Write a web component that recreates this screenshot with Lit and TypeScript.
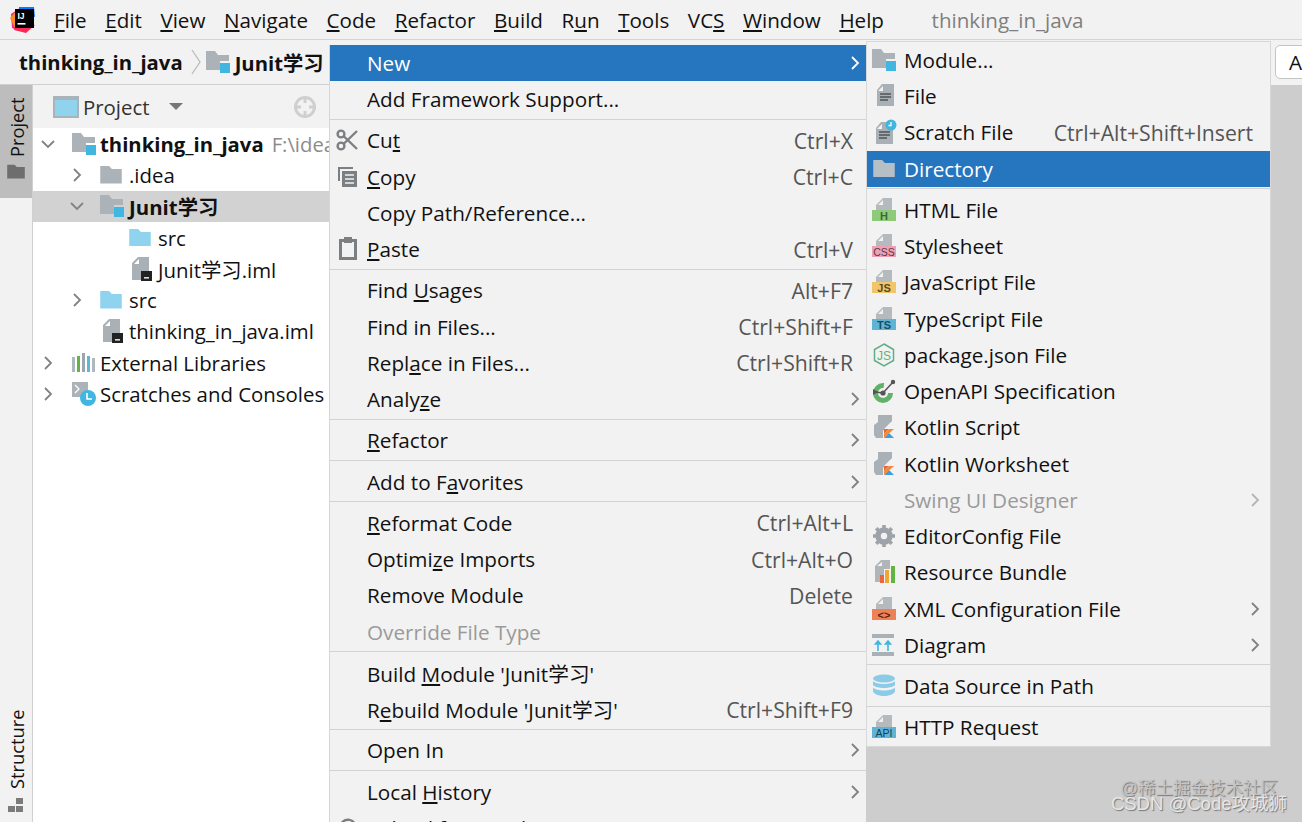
import { LitElement, html, css, svg } from "lit";
import { customElement } from "lit/decorators.js";

const G = "#abb3b9";
const BL = "#40b6e0";
const folder = (c = G, w = 22) => html`<svg width="${w}" height="${w * 0.8}" viewBox="0 0 22 18"><path fill="${c}" d="M0 0h9l3 3h10v15H0z"/></svg>`;
const modFolder = () => html`<svg width="24" height="22" viewBox="0 0 24 22"><path fill="${G}" d="M0 0h9l3 4h11v6h-9v9H0z"/><rect x="14" y="12" width="10" height="10" fill="${BL}"/></svg>`;
const badgeDoc = (c: string, t: string, tc: string) => html`<svg width="24" height="24" viewBox="0 0 24 24"><path fill="#b5babe" d="M11 0h9v12H4V7z"/><path fill="#f2f2f2" d="M11 2v5H6z"/><rect x="0" y="12" width="24" height="11" fill="${c}"/><text x="12" y="21.7" text-anchor="middle" font-family="Liberation Sans" font-size="${t.length > 2 ? 10.5 : 11}" font-weight="${t.length > 2 ? 400 : 700}" fill="${tc}">${t}</text></svg>`;
const fileDoc = () => html`<svg width="24" height="24" viewBox="0 0 24 24"><path fill="#a9b1b7" d="M10 0h12v22H5V6z"/><path fill="#f2f2f2" d="M11 2v5H6z"/><path stroke="#4f5659" stroke-width="1.4" d="M8 10h11M8 13h11M8 16h8"/></svg>`;
const scratch = () => html`<svg width="26" height="26" viewBox="0 0 26 26"><path fill="#a9b1b7" d="M10 3h12v22H5V9z"/><path fill="#f2f2f2" d="M11 5v5H6z"/><path stroke="#4f5659" stroke-width="1.4" d="M8 13h11M8 16h11M8 19h8"/><circle cx="20" cy="6" r="5.5" fill="${BL}"/><path stroke="#fff" stroke-width="1.3" fill="none" d="M20 3v3.5h-2.5"/></svg>`;
const iml = () => html`<svg width="24" height="24" viewBox="0 0 24 24"><path fill="#a9b1b7" d="M8 0h11v14h-7v9H2V6z"/><path fill="#fff" d="M9 2v5H4z"/><rect x="11" y="14" width="11" height="10" fill="#222"/><rect x="14" y="20" width="5" height="1.6" fill="#ddd"/></svg>`;
const gear = () => html`<svg width="22" height="22" viewBox="0 0 22 22"><circle cx="11" cy="11" r="6.5" fill="none" stroke="#9da3a8" stroke-width="4.5"/><path stroke="#9da3a8" stroke-width="3.6" d="M11 0v22M0 11h22M3.2 3.2l15.6 15.6M18.8 3.2L3.2 18.8"/><circle cx="11" cy="11" r="3.2" fill="#f2f2f2"/></svg>`;
const kotlin = () => html`<svg width="24" height="24" viewBox="0 0 24 24"><path fill="#a9b1b7" d="M6 0h14v6l-9 10v7H4l-2-3V10l4-3z"/><path fill="#f2f2f2" d="M12 23V14l6-6h6v15z"/><path fill="#3d9de0" d="M12 23l5-5 5 5z"/><path fill="#e8673b" d="M12 14h5l-5 5z"/><path fill="#f08a3a" d="M17 14h5l-10 9v-4z"/></svg>`;
const openapi = () => html`<svg width="24" height="24" viewBox="0 0 24 24"><circle cx="11" cy="14" r="7.5" fill="none" stroke="#62b06a" stroke-width="5" stroke-dasharray="36 11"/><path stroke="#555" stroke-width="1.5" d="M11 14L21 3M3 13l8 1"/><circle cx="11" cy="14" r="2.6" fill="#555"/><circle cx="21" cy="3" r="2.2" fill="#555"/><path fill="#555" d="M1 10l5 3-5 3z"/></svg>`;
const nodeIcon = () => html`<svg width="22" height="24" viewBox="0 0 22 24"><path fill="none" stroke="#5fae86" stroke-width="1.5" d="M11 1l9.5 5.5v11L11 23l-9.5-5.5v-11z"/><text x="11" y="16.5" text-anchor="middle" font-family="Liberation Sans" font-size="12" fill="#5fae86">JS</text></svg>`;
const resource = () => html`<svg width="24" height="24" viewBox="0 0 24 24"><path fill="#b0b5b9" d="M9 0h9v9h-6v13H3V6z"/><path fill="#f2f2f2" d="M10 2v4H5z"/><rect x="8" y="15" width="4" height="8" fill="#e8673b"/><rect x="13" y="10" width="4" height="13" fill="#f0a732"/><rect x="19" y="6" width="4" height="17" fill="#62b543"/></svg>`;
const diagram = () => html`<svg width="24" height="24" viewBox="0 0 24 24"><rect width="22" height="4" y="1" fill="#a9b1b7"/><rect width="22" height="4" y="19" fill="#a9b1b7"/><path stroke="${BL}" stroke-width="1.6" fill="#40b6e0" d="M6 18V10M3.5 11L6 8l2.5 3zM16 18V10M13.5 11L16 8l2.5 3z"/></svg>`;
const db = () => html`<svg width="24" height="24" viewBox="0 0 24 24"><g fill="#8ccbe8"><ellipse cx="12" cy="4.5" rx="11" ry="4"/><path d="M1 7c3 4 19 4 22 0v4c-3 4-19 4-22 0zM1 13.5c3 4 19 4 22 0v4c-3 6-19 6-22 0z"/></g></svg>`;
const cut = () => html`<svg width="24" height="24" viewBox="0 0 24 24"><g fill="none" stroke="#7b7f82" stroke-width="2.4"><circle cx="5" cy="6" r="3.4"/><circle cx="5" cy="18" r="3.4"/><path d="M7.5 8L21 21M7.5 16L21 3"/></g></svg>`;
const copy = () => html`<svg width="22" height="22" viewBox="0 0 22 22"><path fill="none" stroke="#7b7f82" stroke-width="2" d="M2 15V2h14"/><rect x="5" y="5" width="15" height="16" fill="#7b7f82"/><path stroke="#f2f2f2" stroke-width="1.4" d="M8 9h9M8 13h9M8 17h9"/></svg>`;
const paste = () => html`<svg width="18" height="24" viewBox="0 0 18 24"><rect x="1.5" y="3.5" width="15" height="18" fill="none" stroke="#7b7f82" stroke-width="3"/><rect x="5" y="0" width="8" height="6" fill="#7b7f82"/></svg>`;
const reload = () => html`<svg width="20" height="20" viewBox="0 0 20 20"><path fill="none" stroke="#7b7f82" stroke-width="2.4" d="M2 10a8 8 0 1 1 3 6"/></svg>`;
const libs = () => html`<svg width="24" height="20" viewBox="0 0 24 20"><rect x="0" y="4" width="3" height="15" fill="#b0b8be"/><rect x="5" y="3" width="3" height="16" fill="#62b543"/><rect x="10" y="0" width="3" height="19" fill="#9aa7b0"/><rect x="15" y="3" width="3" height="16" fill="#5bb7dd"/><rect x="20" y="5" width="3" height="14" fill="#b0b8be"/></svg>`;
const scr = () => html`<svg width="24" height="24" viewBox="0 0 24 24"><path fill="#abb3b9" d="M0 0h16v12h-6v3H0z"/><path fill="none" stroke="#fff" stroke-width="1.3" d="M3 3l4 4-4 4"/><circle cx="16" cy="16" r="8" fill="${BL}"/><path fill="none" stroke="#fff" stroke-width="1.6" d="M15 11v6h5"/></svg>`;
const logo = () => html`<svg width="26" height="28" viewBox="0 0 26 28"><path fill="#f0308a" d="M1 8L11 1l-2 24-7-3z"/><path fill="#ff8a2a" d="M0 12l7-8 6 6-7 14z"/><path fill="#fe2857" d="M4 24l12 3 9-8-18-4z"/><path fill="#087cfa" d="M9 1h15l1 10-16-2z"/><rect x="5" y="3" width="19" height="19" fill="#000"/><text x="7.5" y="12.5" font-family="Liberation Sans" font-weight="700" font-size="8.5" fill="#fff">IJ</text><rect x="7.5" y="17" width="8" height="1.6" fill="#fff"/></svg>`;

type Row = { t?: string; u?: number; k?: string; ar?: boolean; dis?: boolean; ic?: unknown; sep?: boolean; hi?: boolean };

const main: Row[] = [
  { t: "New", hi: true, ar: true },
  { t: "Add Framework Support..." },
  { sep: true },
  { t: "Cut", u: 2, k: "Ctrl+X", ic: cut() },
  { t: "Copy", u: 0, k: "Ctrl+C", ic: copy() },
  { t: "Copy Path/Reference..." },
  { t: "Paste", u: 0, k: "Ctrl+V", ic: paste() },
  { sep: true },
  { t: "Find Usages", u: 5, k: "Alt+F7" },
  { t: "Find in Files...", k: "Ctrl+Shift+F" },
  { t: "Replace in Files...", u: 4, k: "Ctrl+Shift+R" },
  { t: "Analyze", u: 5, ar: true },
  { sep: true },
  { t: "Refactor", u: 0, ar: true },
  { sep: true },
  { t: "Add to Favorites", u: 8, ar: true },
  { sep: true },
  { t: "Reformat Code", u: 0, k: "Ctrl+Alt+L" },
  { t: "Optimize Imports", u: 6, k: "Ctrl+Alt+O" },
  { t: "Remove Module", k: "Delete" },
  { t: "Override File Type", dis: true },
  { sep: true },
  { t: "Build Module 'Junit学习'", u: 6 },
  { t: "Rebuild Module 'Junit学习'", u: 1, k: "Ctrl+Shift+F9" },
  { sep: true },
  { t: "Open In", ar: true },
  { sep: true },
  { t: "Local History", u: 6, ar: true },
  { t: "Reload from Disk", ic: reload() },
];

const sub: Row[] = [
  { t: "Module...", ic: modFolder() },
  { t: "File", ic: fileDoc() },
  { t: "Scratch File", k: "Ctrl+Alt+Shift+Insert", ic: scratch() },
  { t: "Directory", hi: true, ic: folder("#b6bfc6", 22) },
  { sep: true },
  { t: "HTML File", ic: badgeDoc("#8fc97a", "H", "#3b6b33") },
  { t: "Stylesheet", ic: badgeDoc("#eda1b6", "CSS", "#5c3a44") },
  { t: "JavaScript File", ic: badgeDoc("#f2c56b", "JS", "#5e4a1c") },
  { t: "TypeScript File", ic: badgeDoc("#5fb4d6", "TS", "#1d4c63") },
  { t: "package.json File", ic: nodeIcon() },
  { t: "OpenAPI Specification", ic: openapi() },
  { t: "Kotlin Script", ic: kotlin() },
  { t: "Kotlin Worksheet", ic: kotlin() },
  { t: "Swing UI Designer", dis: true, ar: true },
  { t: "EditorConfig File", ic: gear() },
  { t: "Resource Bundle", ic: resource() },
  { t: "XML Configuration File", ar: true, ic: badgeDoc("#ee8256", "<>", "#5a2412") },
  { t: "Diagram", ar: true, ic: diagram() },
  { sep: true },
  { t: "Data Source in Path", ic: db() },
  { sep: true },
  { t: "HTTP Request", ic: badgeDoc("#5fb4d6", "API", "#123f55") },
];

const menubar: [string, number][] = [["File", 0], ["Edit", 0], ["View", 0], ["Navigate", 0], ["Code", 0], ["Refactor", 0], ["Build", 0], ["Run", 1], ["Tools", 0], ["VCS", 2], ["Window", 0], ["Help", 0]];

const label = (t: string, u?: number) =>
  u === undefined ? t : html`${t.slice(0, u)}<u>${t[u]}</u>${t.slice(u + 1)}`;

const chev = () => html`<svg class="arrow" width="10" height="16" viewBox="0 0 10 16"><path fill="none" stroke="currentColor" stroke-width="1.8" d="M2 2l6 6-6 6"/></svg>`;
const chevR = () => html`<svg width="12" height="16" viewBox="0 0 12 16"><path fill="none" stroke="#7f8386" stroke-width="1.8" d="M3 2l6 6-6 6"/></svg>`;
const chevD = () => html`<svg width="16" height="12" viewBox="0 0 16 12"><path fill="none" stroke="#7f8386" stroke-width="1.8" d="M2 3l6 6 6-6"/></svg>`;

@customElement("app-root")
export class AppRoot extends LitElement {
  static styles = css`
    :host { display: block; width: 1302px; height: 822px; position: relative; overflow: hidden; background: #cdcdcd;
      font-family: "Open Sans", "Noto Sans CJK SC", sans-serif; font-size: 20.7px; color: #111; }
    .menubar { height: 40px; background: #f2f2f2; border-bottom: 1px solid #d4d4d4; box-sizing: border-box; display: flex; align-items: center; padding-left: 10px; font-size: 20.6px; }
    .menubar .logo { width: 44px; display: flex; }
    .mi { margin-right: 18.6px; }
    .title { margin-left: 29px; color: #7f7f7f; }
    .crumbs { height: 45px; background: #f2f2f2; border-bottom: 1px solid #d0d0d0; box-sizing: border-box; display: flex; align-items: center; padding-left: 19px; font-weight: 700; font-size: 20.3px; }
    .crumbs svg { flex: none; }
    .crumbs .sep { margin: 0 4px 0 7px; }
    .crumbs .name { margin-left: 5px; }
    .body { display: flex; height: 737px; }
    .strip { width: 32px; background: #f2f2f2; border-right: 1px solid #d0d0d0; display: flex; flex-direction: column; justify-content: space-between; }
    .tab { writing-mode: vertical-rl; transform: rotate(180deg); display: flex; align-items: center; font-size: 18.3px; width: 32px; box-sizing: border-box; gap: 8px; flex-direction: row-reverse; justify-content: flex-start; }
    .tab.on { background: #bdbdbd; height: 113px; padding-bottom: 12px; }
    .tab.bot { height: 112px; }
    .tab svg { transform: rotate(180deg); flex: none; }
    .panel { width: 296px; background: #fff; flex: none; overflow: hidden; font-size: 20.4px; }
    .phead { height: 43px; background: #f2f2f2; display: flex; align-items: center; padding-left: 20px; position: relative; color: #333; }
    .phead .pt { margin-left: 4px; }
    .caret { margin-left: 19px; width: 0; height: 0; border-left: 7px solid transparent; border-right: 7px solid transparent; border-top: 7px solid #777; }
    .target { position: absolute; right: 12px; top: 10px; }
    .tree { display: flex; flex-direction: column; }
    .t { height: 31.3px; display: flex; align-items: center; white-space: nowrap; }
    .t.sel { background: #d2d2d2; font-weight: 700; }
    .t.root { font-weight: 700; font-size: 20.3px; }
    .tw { display: flex; justify-content: center; flex: none; }
    .tw.l0 { width: 30px; }
    .tw.l1 { margin-left: 30px; width: 28px; }
    .ti { display: flex; flex: none; }
    .ti.l0 { margin-left: 9px; width: 28px; }
    .ti.l1 { margin-left: 9px; width: 29px; }
    .ti.src { margin-left: 96px; width: 29px; }
    .ti.imlA { margin-left: 97px; width: 28px; }
    .ti.imlB { margin-left: 68px; width: 28px; }
    .hint { color: #8c8c8c; margin-left: 8px; font-weight: 400; }
    .menu { position: absolute; background: #f2f2f2; box-sizing: border-box; }
    .menu.m { left: 329px; top: 44.8px; width: 537px; border-left: 1px solid #d6d6d6; height: 790px; }
    .menu.s { left: 866px; top: 40.8px; width: 405px; border: 1px solid #d8d8d8; height: 706px; }
    .r { height: 36.25px; display: flex; align-items: center; white-space: nowrap; position: relative; padding-left: 37px; }
    .m .r { padding-right: 13px; }
    .s .r { padding-right: 17px; }
    .r .ic { position: absolute; left: 4px; top: 0; bottom: 0; width: 26px; display: flex; align-items: center; justify-content: center; }
    .m .r .ic { left: 5px; }
    .r.hi { background: #2675bf; color: #fff; }
    .r.dis { color: #9a9a9a; }
    .r .k { margin-left: auto; color: #555; font-size: 21.2px; }
    .r .aw { margin-left: auto; margin-right: -7px; display: flex; color: #808080; }
    .r.hi .aw { color: #fff; }
    .r.dis .aw { color: #b5b5b5; }
    .sp { height: 5px; box-sizing: border-box; padding-top: 1.4px; }
    .sp i { display: block; height: 1px; background: #d2d2d2; }
    .search { position: absolute; left: 1275px; top: 45px; width: 40px; height: 34px; background: #fff; border: 1px solid #c4c4c4; border-radius: 5px; box-sizing: border-box; padding-left: 13px; line-height: 32px; }
    .right { position: absolute; left: 1271px; top: 40px; right: 0; height: 45px; background: #f2f2f2; }
    .wm { position: absolute; right: 15px; top: 780.5px; font-family: "Liberation Sans", "Noto Sans CJK SC", sans-serif; font-size: 18.5px; color: #e6e6e6; line-height: 15px; text-align: right; text-shadow: 1px 1px 1px #777; white-space: nowrap; }
    .wm .a { margin-right: 9px; color: #c4c4c4; font-size: 17.5px; }
  `;

  private row(r: Row) {
    if (r.sep) return html`<div class="sp"><i></i></div>`;
    return html`<div class="r ${r.hi ? "hi" : ""} ${r.dis ? "dis" : ""}">
      ${r.ic ? html`<span class="ic">${r.ic}</span>` : ""}
      <span>${label(r.t!, r.u)}</span>
      ${r.k ? html`<span class="k">${r.k}</span>` : ""}
      ${r.ar ? html`<span class="aw">${chev()}</span>` : ""}
    </div>`;
  }

  render() {
    return html`
      <div class="menubar">
        <span class="logo">${logo()}</span>
        ${menubar.map(([t, u]) => html`<span class="mi">${label(t, u)}</span>`)}
        <span class="title">thinking_in_java</span>
      </div>
      <div class="crumbs">
        <span>thinking_in_java</span>
        <svg class="sep" width="12" height="26" viewBox="0 0 12 26"><path fill="none" stroke="#bbb" stroke-width="1.3" d="M2 1l8 12-8 12"/></svg>
        ${modFolder()}
        <span class="name">Junit学习</span>
      </div>
      <div class="body">
        <div class="strip">
          <div class="tab on"><span>Project</span>${folder("#6e6e6e", 18)}</div>
          <div class="tab bot"><span>Structure</span>
            <svg width="16" height="16" viewBox="0 0 16 16"><path fill="#7b7b7b" d="M0 9h7v6H0zM8 9h7v6H8zM8 1h7v6H8z"/></svg>
          </div>
        </div>
        <div class="panel">
          <div class="phead">
            <svg width="26" height="22" viewBox="0 0 26 22"><rect x="1" y="1" width="24" height="20" fill="#8fd3ef" stroke="#a9b3ba" stroke-width="2"/><rect x="1" y="1" width="24" height="3" fill="#a9b3ba"/></svg>
            <span class="pt">Project</span><span class="caret"></span>
            <svg class="target" width="24" height="24" viewBox="0 0 24 24"><circle cx="12" cy="12" r="9.5" fill="none" stroke="#cfcfcf" stroke-width="3"/><path stroke="#cfcfcf" stroke-width="3" d="M12 1v7M12 16v7M1 12h7M16 12h7"/></svg>
          </div>
          <div class="tree">
            <div class="t root"><span class="tw l0">${chevD()}</span><span class="ti l0">${modFolder()}</span>thinking_in_java<span class="hint">F:\\idea</span></div>
            <div class="t"><span class="tw l1">${chevR()}</span><span class="ti l1">${folder()}</span>.idea</div>
            <div class="t sel"><span class="tw l1">${chevD()}</span><span class="ti l1">${modFolder()}</span>Junit学习</div>
            <div class="t"><span class="ti src">${folder("#8fd3ef")}</span>src</div>
            <div class="t"><span class="ti imlA">${iml()}</span>Junit学习.iml</div>
            <div class="t"><span class="tw l1">${chevR()}</span><span class="ti l1">${folder("#8fd3ef")}</span>src</div>
            <div class="t"><span class="ti imlB">${iml()}</span>thinking_in_java.iml</div>
            <div class="t"><span class="tw l0">${chevR()}</span><span class="ti l0">${libs()}</span>External Libraries</div>
            <div class="t"><span class="tw l0">${chevR()}</span><span class="ti l0">${scr()}</span>Scratches and Consoles</div>
          </div>
        </div>
      </div>
      <div class="right"></div>
      <div class="search">A</div>
      <div class="menu m">${main.map((r) => this.row(r))}</div>
      <div class="menu s">${sub.map((r) => this.row(r))}</div>
      <div class="wm"><div class="a">@稀土掘金技术社区</div><div>CSDN @Code攻城狮</div></div>
    `;
  }
}
